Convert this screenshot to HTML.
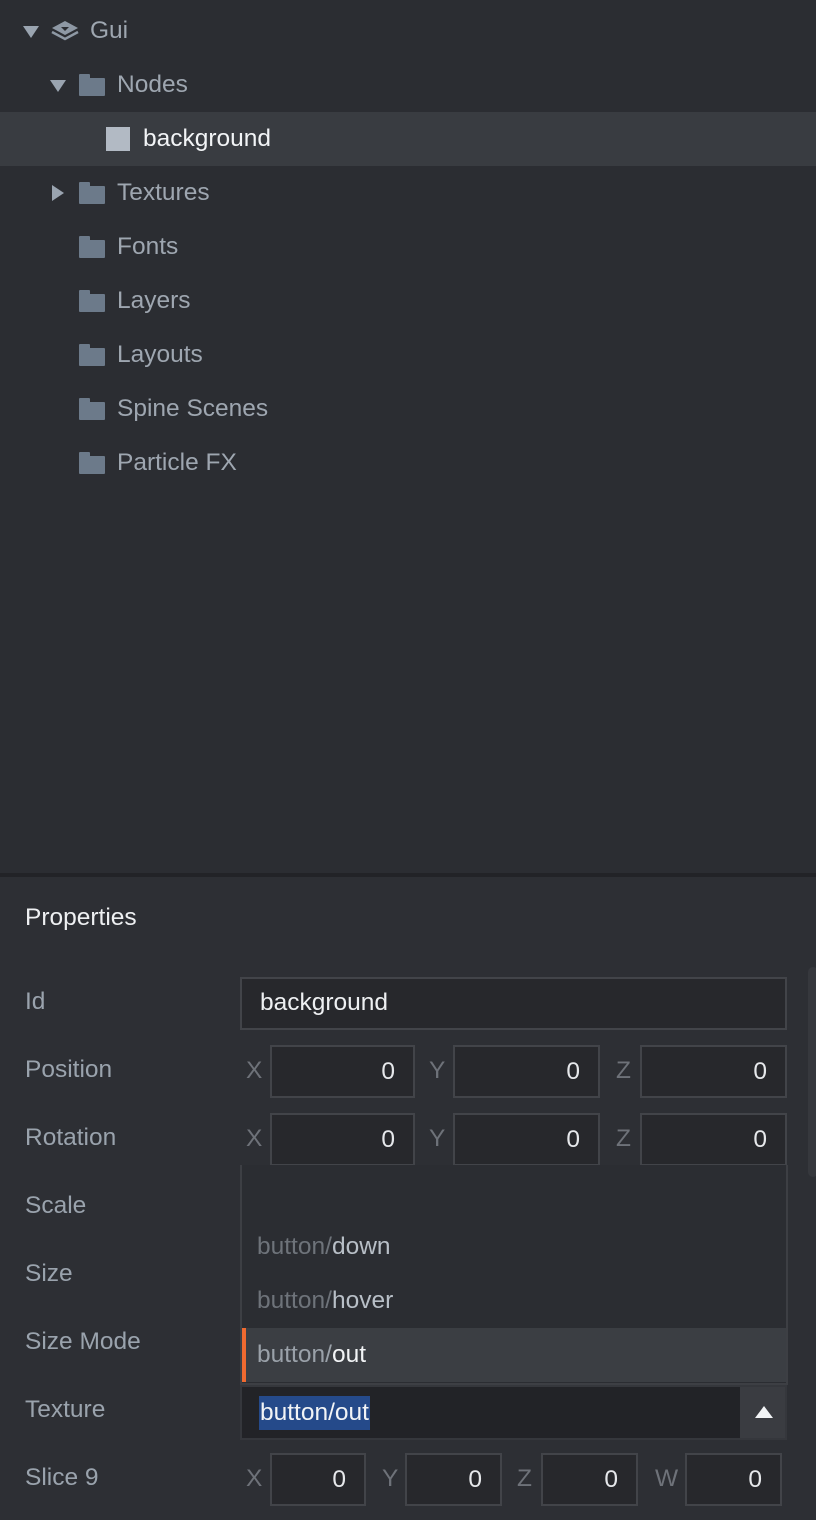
<!DOCTYPE html>
<html><head><meta charset="utf-8">
<style>
*{margin:0;padding:0;box-sizing:border-box}
body{width:816px;height:1520px;background:#2b2d32;font-family:"Liberation Sans",sans-serif;position:relative;overflow:hidden;color:#9ea6b0}
.a{position:absolute}
.t{font-size:24.5px;line-height:54px;height:54px;white-space:nowrap}
.tri-d{width:0;height:0;border-left:8px solid transparent;border-right:8px solid transparent;border-top:12px solid #9aa4b0}
.tri-r{width:0;height:0;border-top:8px solid transparent;border-bottom:8px solid transparent;border-left:12px solid #9aa4b0}
.fold{width:26px;height:18px;background:#6c7a8a;border-radius:1px}
.fold:before{content:"";position:absolute;left:0;top:-4px;width:11px;height:5px;background:#6c7a8a;border-radius:1px 1px 0 0}
.lbl{font-size:24.5px;color:#9aa3ad}
.box{border:2px solid #424449;background:#27282c;height:53px}
.num{font-size:24.5px;color:#e6e8eb;text-align:right;padding-right:18px;line-height:49px}
.ax{font-size:24.5px;color:#6e7279}
</style></head><body>
<div class="a" style="left:0;top:112px;width:816px;height:54px;background:#393c41"></div>

<div class="a tri-d" style="left:23px;top:26px"></div>
<svg class="a" style="left:50px;top:20px" width="30" height="22" viewBox="0 0 30 22"><path d="M15 1 L28 8 L15 15 L2 8 Z" fill="#8e98a4"/><path d="M11 7 L19 7 L15 11 Z" fill="#2b2d32"/><path d="M2 12 L15 19 L28 12" fill="none" stroke="#8e98a4" stroke-width="2.5"/></svg>
<div class="a t" style="left:90px;top:4px">Gui</div>

<div class="a tri-d" style="left:50px;top:80px"></div>
<div class="a fold" style="left:79px;top:78px"></div>
<div class="a t" style="left:117px;top:58px">Nodes</div>

<div class="a" style="left:106px;top:127px;width:24px;height:24px;background:#b2bac4"></div>
<div class="a t" style="left:143px;top:112px;color:#f2f4f6">background</div>

<div class="a tri-r" style="left:52px;top:185px"></div>
<div class="a fold" style="left:79px;top:186px"></div>
<div class="a t" style="left:117px;top:166px">Textures</div>

<div class="a fold" style="left:79px;top:240px"></div>
<div class="a t" style="left:117px;top:220px">Fonts</div>
<div class="a fold" style="left:79px;top:294px"></div>
<div class="a t" style="left:117px;top:274px">Layers</div>
<div class="a fold" style="left:79px;top:348px"></div>
<div class="a t" style="left:117px;top:328px">Layouts</div>
<div class="a fold" style="left:79px;top:402px"></div>
<div class="a t" style="left:117px;top:382px">Spine Scenes</div>
<div class="a fold" style="left:79px;top:456px"></div>
<div class="a t" style="left:117px;top:436px">Particle FX</div>

<div class="a" style="left:0;top:873px;width:816px;height:4px;background:#222327"></div>
<div class="a" style="left:0;top:877px;width:816px;height:643px;background:#2d2f34"></div>
<div class="a" style="left:808px;top:967px;width:10px;height:210px;background:#36383d;border-radius:5px"></div>

<div class="a" style="left:25px;top:904px;font-size:24.5px;color:#eef0f2">Properties</div>

<div class="a lbl" style="left:25px;top:988px">Id</div>
<div class="a box" style="left:240px;top:977px;width:547px"></div>
<div class="a" style="left:260px;top:989px;font-size:24.5px;color:#eef0f2">background</div>

<div class="a lbl" style="left:25px;top:1056px">Position</div>
<div class="a ax" style="left:246px;top:1057px">X</div><div class="a box num" style="left:270px;top:1045px;width:145px">0</div>
<div class="a ax" style="left:429px;top:1057px">Y</div><div class="a box num" style="left:453px;top:1045px;width:147px">0</div>
<div class="a ax" style="left:616px;top:1057px">Z</div><div class="a box num" style="left:640px;top:1045px;width:147px">0</div>

<div class="a lbl" style="left:25px;top:1124px">Rotation</div>
<div class="a ax" style="left:246px;top:1125px">X</div><div class="a box num" style="left:270px;top:1113px;width:145px">0</div>
<div class="a ax" style="left:429px;top:1125px">Y</div><div class="a box num" style="left:453px;top:1113px;width:147px">0</div>
<div class="a ax" style="left:616px;top:1125px">Z</div><div class="a box num" style="left:640px;top:1113px;width:147px">0</div>

<div class="a lbl" style="left:25px;top:1192px">Scale</div>
<div class="a lbl" style="left:25px;top:1260px">Size</div>
<div class="a lbl" style="left:25px;top:1328px">Size Mode</div>
<div class="a lbl" style="left:25px;top:1396px">Texture</div>
<div class="a lbl" style="left:25px;top:1464px">Slice 9</div>

<div class="a" style="left:240px;top:1165px;width:548px;height:220px;background:#2b2d32;border:2px solid #3d3f44;border-top:none"></div>
<div class="a" style="left:257px;top:1233px;font-size:24.5px;color:#6e737a">button/<span style="color:#b8bfc7">down</span></div>
<div class="a" style="left:257px;top:1287px;font-size:24.5px;color:#6e737a">button/<span style="color:#b8bfc7">hover</span></div>
<div class="a" style="left:242px;top:1328px;width:544px;height:54px;background:#3b3e43"></div>
<div class="a" style="left:242px;top:1328px;width:4px;height:54px;background:#f06a30"></div>
<div class="a" style="left:257px;top:1341px;font-size:24.5px;color:#9aa1a9">button/<span style="color:#f2f4f6">out</span></div>

<div class="a" style="left:240px;top:1385px;width:547px;height:55px;background:#222327;border:2px solid #35373c"></div>
<div class="a" style="left:740px;top:1387px;width:45px;height:51px;background:#3a3c41"></div>
<div class="a" style="left:755px;top:1406px;width:0;height:0;border-left:9px solid transparent;border-right:9px solid transparent;border-bottom:12px solid #f2f4f6"></div>
<div class="a" style="left:259px;top:1396px;height:34px;padding:0 1px;background:#254a8a;font-size:24.5px;line-height:34px;color:#f2f4f6">button/out</div>

<div class="a ax" style="left:246px;top:1465px">X</div><div class="a box num" style="left:270px;top:1453px;width:96px">0</div>
<div class="a ax" style="left:382px;top:1465px">Y</div><div class="a box num" style="left:405px;top:1453px;width:97px">0</div>
<div class="a ax" style="left:517px;top:1465px">Z</div><div class="a box num" style="left:541px;top:1453px;width:97px">0</div>
<div class="a ax" style="left:655px;top:1465px">W</div><div class="a box num" style="left:685px;top:1453px;width:97px">0</div>
</body></html>
